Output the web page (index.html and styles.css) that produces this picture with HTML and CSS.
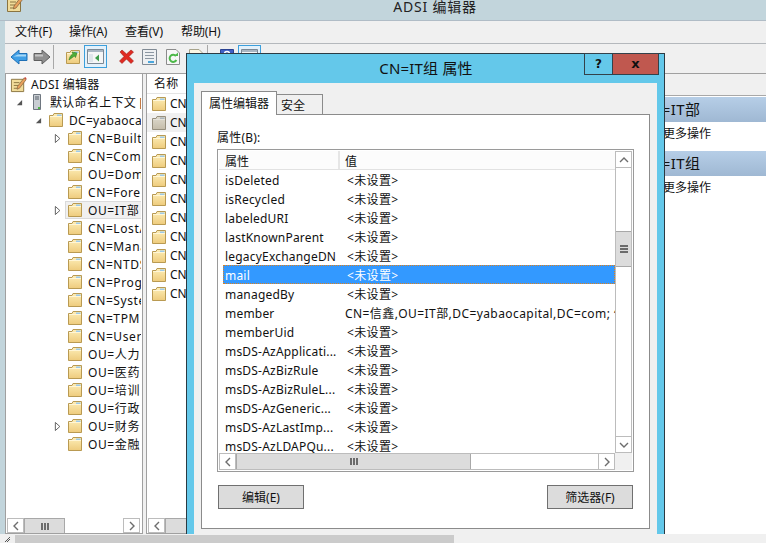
FILE: index.html
```html
<!DOCTYPE html>
<html lang="zh-CN">
<head>
    <meta charset="UTF-8">
    <title>ADSI 编辑器</title>
    <link rel="stylesheet" href="styles.css">
</head>
<body>
    <svg class="defs" width="0" height="0">
        <defs>
            <linearGradient id="folderFill" x1="0" y1="0" x2="0" y2="1">
                <stop offset="0" stop-color="#fdeeb8"/>
                <stop offset="1" stop-color="#eecb7c"/>
            </linearGradient>
            <symbol id="folder" viewBox="0 0 16 16">
                <path d="M1.5 3.5 H5 L6 1.5 H14.5 V14.5 H1.5 Z" fill="url(#folderFill)" stroke="#b99a52"/>
                <path d="M9 2.5 H13.5 V4.5 H9 Z" fill="#9cc9e8"/>
                <path d="M2 4.5 H14" stroke="#fff6d6"/>
            </symbol>
            <symbol id="twistOpen" viewBox="0 0 8 8" preserveAspectRatio="xMinYMid">
                <path d="M7 1 V7 H1 Z" fill="#555"/>
            </symbol>
            <symbol id="twistClosed" viewBox="0 0 8 10" preserveAspectRatio="xMinYMid">
                <path d="M1.5 0.5 L6.5 5 L1.5 9.5 Z" fill="#fff" stroke="#555"/>
            </symbol>
            <symbol id="chevLeft" viewBox="0 0 10 10">
                <path d="M7 1 L3 5 L7 9" fill="none" stroke="#6d6d6d" stroke-width="1.4"/>
            </symbol>
            <symbol id="chevRight" viewBox="0 0 10 10">
                <path d="M3 1 L7 5 L3 9" fill="none" stroke="#6d6d6d" stroke-width="1.4"/>
            </symbol>
            <symbol id="chevUp" viewBox="0 0 10 10">
                <path d="M1 7 L5 3 L9 7" fill="none" stroke="#6d6d6d" stroke-width="1.4"/>
            </symbol>
            <symbol id="chevDown" viewBox="0 0 10 10">
                <path d="M1 3 L5 7 L9 3" fill="none" stroke="#6d6d6d" stroke-width="1.4"/>
            </symbol>
            <symbol id="appIcon" viewBox="0 0 18 18">
                <path d="M1.5 3.5 H14.5 V16.5 H1.5 Z" fill="#f1dc9a" stroke="#8a7440"/>
                <path d="M4 7 H10 M4 10 H9 M4 13 H8" stroke="#8a7440"/>
                <path d="M8 11 L15 2 L17 4 L10 13 L7.5 14 Z" fill="#e8a15c" stroke="#7c5a38" stroke-width=".7"/>
                <path d="M15 2 L17 4 L17.5 2.5 L16 1 Z" fill="#c8433a"/>
            </symbol>
        </defs>
    </svg>

    <div class="app">
        <header class="titlebar">
            <svg class="app-icon"><use href="#appIcon"/></svg>
            <span class="title-text">ADSI 编辑器</span>
        </header>

        <nav class="menubar">
            <span class="menu-item">文件(F)</span>
            <span class="menu-item">操作(A)</span>
            <span class="menu-item">查看(V)</span>
            <span class="menu-item">帮助(H)</span>
        </nav>

        <div class="toolbar">
            <span class="tool">
                <svg width="18" height="16" viewBox="0 0 18 16"><path d="M1 8 L9 1 V4.5 H17 V11.5 H9 V15 Z" fill="#3f9fe6" stroke="#1f6fb5"/><path d="M8 5.5 H16 V7.5 H3.5 Z" fill="#a6d8f7"/></svg>
            </span>
            <span class="tool">
                <svg width="18" height="16" viewBox="0 0 18 16"><path d="M17 8 L9 1 V4.5 H1 V11.5 H9 V15 Z" fill="#8f8f8f" stroke="#5e5e5e"/><path d="M2 5.5 H10 V7.5 H2 Z" fill="#c4c4c4"/></svg>
            </span>
            <span class="tool-sep"></span>
            <span class="tool">
                <svg width="16" height="16" viewBox="0 0 16 16"><use href="#folder"/><path d="M4 11 C5 7 6 6 8 5 L7 3 L12 4 L10.5 8.5 L9.5 7 C8 8 6.5 9 4 11 Z" fill="#4fae3a" stroke="#2d7d21" stroke-width=".6"/></svg>
            </span>
            <span class="tool tool-on">
                <svg width="17" height="15" viewBox="0 0 17 15"><path d="M.5 .5 H16.5 V14.5 H.5 Z" fill="#f6f6f6" stroke="#7c8894"/><path d="M1 1 H16 V3 H1 Z" fill="#a9b6c2"/><path d="M2 5 H6 V13 H2 Z" fill="#dfe5ea"/><path d="M8 9 L12 5.5 V12.5 Z" fill="#3d9c4a"/></svg>
            </span>
            <span class="tool tool-group">
                <svg width="17" height="17" viewBox="0 0 17 17"><path d="M2 4 L4 2 L8.5 6 L13 2 L15.5 4 L11 8.5 L15.5 13 L13 15.5 L8.5 11 L4 15.5 L1.5 13 L6 8.5 Z" fill="#e02a22" stroke="#9c1f1a" stroke-width=".6"/></svg>
            </span>
            <span class="tool">
                <svg width="15" height="16" viewBox="0 0 15 16"><path d="M.5 .5 H14.5 V15.5 H.5 Z" fill="#eef0f2" stroke="#808a94"/><path d="M3 3.5 H12 M3 6.5 H12 M3 9.5 H12" stroke="#8c97a2"/><path d="M6 12 H12 V14 H6 Z" fill="#4aa6dc"/></svg>
            </span>
            <span class="tool">
                <svg width="14" height="16" viewBox="0 0 14 16"><path d="M.5 .5 H10 L13.5 4 V15.5 H.5 Z" fill="#f7f7f7" stroke="#8c8c8c"/><path d="M10 7 A3.6 3.6 0 1 0 10.4 11" fill="none" stroke="#4cb848" stroke-width="2"/><path d="M8 7 H12 V3.5 Z" fill="#4cb848"/></svg>
            </span>
            <span class="tool">
                <svg width="14" height="16" viewBox="0 0 14 16"><path d="M.5 .5 H10 L13.5 4 V15.5 H.5 Z" fill="#fbf7e4" stroke="#a8a48c"/></svg>
            </span>
            <span class="tool-sep"></span>
            <span class="tool">
                <svg width="14" height="16" viewBox="0 0 14 16"><path d="M.5 .5 H13.5 V15.5 H.5 Z" fill="#3f5fc4" stroke="#2a4292"/><circle cx="7" cy="5" r="2.5" fill="none" stroke="#fff" stroke-width="1.4"/></svg>
            </span>
            <span class="tool tool-on">
                <svg width="17" height="15" viewBox="0 0 17 15"><path d="M.5 .5 H16.5 V14.5 H.5 Z" fill="#f6f6f6" stroke="#7c8894"/><path d="M1 1 H16 V3 H1 Z" fill="#a9b6c2"/></svg>
            </span>
        </div>

        <div class="workspace">
            <aside class="pane tree-pane">
                <div class="tree">
                    <div class="tree-row depth-0"><svg class="app-small"><use href="#appIcon"/></svg><span>ADSI 编辑器</span></div>
                    <div class="tree-row depth-1">
                        <svg class="twist"><use href="#twistOpen"/></svg>
                        <svg class="row-icon" viewBox="0 0 16 16"><path d="M4.5 .5 H11.5 V15.5 H4.5 Z" fill="#c9ced3" stroke="#6f7780"/><path d="M6 3 H10 M6 5 H10" stroke="#59616a"/><path d="M9 13 H11 V15 H9 Z" fill="#4fb548"/></svg>
                        <span>默认命名上下文 [</span>
                    </div>
                    <div class="tree-row depth-2"><svg class="twist"><use href="#twistOpen"/></svg><svg class="row-icon"><use href="#folder"/></svg><span>DC=yabaocapital,DC=com</span></div>
                    <div class="tree-row depth-3"><svg class="twist closed"><use href="#twistClosed"/></svg><svg class="row-icon"><use href="#folder"/></svg><span>CN=Builtin</span></div>
                    <div class="tree-row depth-3"><i class="twist"></i><svg class="row-icon"><use href="#folder"/></svg><span>CN=Computers</span></div>
                    <div class="tree-row depth-3"><i class="twist"></i><svg class="row-icon"><use href="#folder"/></svg><span>OU=Domain Controllers</span></div>
                    <div class="tree-row depth-3"><i class="twist"></i><svg class="row-icon"><use href="#folder"/></svg><span>CN=ForeignSecurityPrincipals</span></div>
                    <div class="tree-row depth-3 tree-row-on"><svg class="twist closed"><use href="#twistClosed"/></svg><svg class="row-icon"><use href="#folder"/></svg><span>OU=IT部</span></div>
                    <div class="tree-row depth-3"><i class="twist"></i><svg class="row-icon"><use href="#folder"/></svg><span>CN=LostAndFound</span></div>
                    <div class="tree-row depth-3"><i class="twist"></i><svg class="row-icon"><use href="#folder"/></svg><span>CN=Managed Service</span></div>
                    <div class="tree-row depth-3"><i class="twist"></i><svg class="row-icon"><use href="#folder"/></svg><span>CN=NTDS Quotas</span></div>
                    <div class="tree-row depth-3"><i class="twist"></i><svg class="row-icon"><use href="#folder"/></svg><span>CN=Program Data</span></div>
                    <div class="tree-row depth-3"><i class="twist"></i><svg class="row-icon"><use href="#folder"/></svg><span>CN=System</span></div>
                    <div class="tree-row depth-3"><i class="twist"></i><svg class="row-icon"><use href="#folder"/></svg><span>CN=TPM Devices</span></div>
                    <div class="tree-row depth-3"><i class="twist"></i><svg class="row-icon"><use href="#folder"/></svg><span>CN=Users</span></div>
                    <div class="tree-row depth-3"><i class="twist"></i><svg class="row-icon"><use href="#folder"/></svg><span>OU=人力</span></div>
                    <div class="tree-row depth-3"><i class="twist"></i><svg class="row-icon"><use href="#folder"/></svg><span>OU=医药</span></div>
                    <div class="tree-row depth-3"><i class="twist"></i><svg class="row-icon"><use href="#folder"/></svg><span>OU=培训</span></div>
                    <div class="tree-row depth-3"><i class="twist"></i><svg class="row-icon"><use href="#folder"/></svg><span>OU=行政</span></div>
                    <div class="tree-row depth-3"><svg class="twist closed"><use href="#twistClosed"/></svg><svg class="row-icon"><use href="#folder"/></svg><span>OU=财务</span></div>
                    <div class="tree-row depth-3"><i class="twist"></i><svg class="row-icon"><use href="#folder"/></svg><span>OU=金融</span></div>
                </div>
                <div class="hscroll tree-scroll">
                    <span class="sb-btn"><svg><use href="#chevLeft"/></svg></span>
                    <span class="sb-thumb tree-thumb"><i class="grip"></i></span>
                    <span class="sb-track"></span>
                    <span class="sb-btn"><svg><use href="#chevRight"/></svg></span>
                </div>
            </aside>

            <section class="pane list-pane">
                <div class="list-head">名称</div>
                <div class="list-rows">
                    <div class="list-row"><svg class="row-icon"><use href="#folder"/></svg><span>CN</span></div>
                    <div class="list-row list-row-on"><svg class="row-icon dim"><use href="#folder"/></svg><span>CN</span></div>
                    <div class="list-row"><svg class="row-icon"><use href="#folder"/></svg><span>CN</span></div>
                    <div class="list-row"><svg class="row-icon"><use href="#folder"/></svg><span>CN</span></div>
                    <div class="list-row"><svg class="row-icon"><use href="#folder"/></svg><span>CN</span></div>
                    <div class="list-row"><svg class="row-icon"><use href="#folder"/></svg><span>CN</span></div>
                    <div class="list-row"><svg class="row-icon"><use href="#folder"/></svg><span>CN</span></div>
                    <div class="list-row"><svg class="row-icon"><use href="#folder"/></svg><span>CN</span></div>
                    <div class="list-row"><svg class="row-icon"><use href="#folder"/></svg><span>CN</span></div>
                    <div class="list-row"><svg class="row-icon"><use href="#folder"/></svg><span>CN</span></div>
                    <div class="list-row"><svg class="row-icon"><use href="#folder"/></svg><span>CN</span></div>
                </div>
                <div class="hscroll list-scroll">
                    <span class="sb-btn"><svg><use href="#chevLeft"/></svg></span>
                    <span class="sb-thumb list-thumb"></span>
                </div>
            </section>

            <aside class="actions">
                <div class="actions-top"></div>
                <div class="action-head">CN=IT部</div>
                <div class="action-link">更多操作</div>
                <div class="action-head action-head-next">CN=IT组</div>
                <div class="action-link">更多操作</div>
            </aside>
        </div>

        <footer class="statusbar">
            <span class="status-corner"><svg width="8" height="8" viewBox="0 0 8 8"><path d="M1 7 L6 2 M3 7 L6 4" stroke="#555"/></svg></span>
            <span class="status-thumb"></span>
        </footer>
    </div>

    <div class="dialog">
        <div class="dialog-title">
            <span class="dialog-name">CN=IT组 属性</span>
            <span class="cap-btn cap-help">?</span>
            <span class="cap-btn cap-close">x</span>
        </div>
        <div class="dialog-client">
            <div class="tabs">
                <span class="tab tab-on">属性编辑器</span>
                <span class="tab">安全</span>
            </div>
            <div class="tab-page">
                <label class="attr-label">属性(B):</label>
                <div class="attr-box">
                    <div class="attr-main">
                        <div class="attr-view">
                            <div class="attr-head"><span class="col-name">属性</span><span class="col-value">值</span></div>
                            <div class="attr-row"><span class="col-name">isDeleted</span><span class="col-value">&lt;未设置&gt;</span></div>
                            <div class="attr-row"><span class="col-name">isRecycled</span><span class="col-value">&lt;未设置&gt;</span></div>
                            <div class="attr-row"><span class="col-name">labeledURI</span><span class="col-value">&lt;未设置&gt;</span></div>
                            <div class="attr-row"><span class="col-name">lastKnownParent</span><span class="col-value">&lt;未设置&gt;</span></div>
                            <div class="attr-row"><span class="col-name">legacyExchangeDN</span><span class="col-value">&lt;未设置&gt;</span></div>
                            <div class="attr-row attr-row-on"><span class="col-name">mail</span><span class="col-value">&lt;未设置&gt;</span></div>
                            <div class="attr-row"><span class="col-name">managedBy</span><span class="col-value">&lt;未设置&gt;</span></div>
                            <div class="attr-row"><span class="col-name">member</span><span class="col-value col-long">CN=信鑫,OU=IT部,DC=yabaocapital,DC=com; 信</span></div>
                            <div class="attr-row"><span class="col-name">memberUid</span><span class="col-value">&lt;未设置&gt;</span></div>
                            <div class="attr-row"><span class="col-name">msDS-AzApplicati...</span><span class="col-value">&lt;未设置&gt;</span></div>
                            <div class="attr-row"><span class="col-name">msDS-AzBizRule</span><span class="col-value">&lt;未设置&gt;</span></div>
                            <div class="attr-row"><span class="col-name">msDS-AzBizRuleL...</span><span class="col-value">&lt;未设置&gt;</span></div>
                            <div class="attr-row"><span class="col-name">msDS-AzGeneric...</span><span class="col-value">&lt;未设置&gt;</span></div>
                            <div class="attr-row"><span class="col-name">msDS-AzLastImp...</span><span class="col-value">&lt;未设置&gt;</span></div>
                            <div class="attr-row"><span class="col-name">msDS-AzLDAPQu...</span><span class="col-value">&lt;未设置&gt;</span></div>
                        </div>
                        <div class="vscroll">
                            <span class="sb-btn"><svg><use href="#chevUp"/></svg></span>
                            <span class="v-gap-top"></span>
                            <span class="v-thumb"><i class="grip-h"></i></span>
                            <span class="sb-track"></span>
                            <span class="sb-btn"><svg><use href="#chevDown"/></svg></span>
                        </div>
                    </div>
                    <div class="attr-foot">
                        <div class="hscroll attr-scroll">
                            <span class="sb-btn"><svg><use href="#chevLeft"/></svg></span>
                            <span class="sb-thumb attr-thumb"><i class="grip"></i></span>
                            <span class="sb-track"></span>
                            <span class="sb-btn"><svg><use href="#chevRight"/></svg></span>
                        </div>
                        <span class="attr-corner"></span>
                    </div>
                </div>
                <div class="dialog-buttons">
                    <button class="btn">编辑(E)</button>
                    <button class="btn">筛选器(F)</button>
                </div>
            </div>
        </div>
    </div>
</body>
</html>
```

FILE: styles.css
```css
* {
    margin: 0;
    padding: 0;
    box-sizing: border-box;
}
html, body {
    width: 766px;
    height: 543px;
    overflow: hidden;
}
body {
    position: relative;
    font-family: "Noto Sans", "Noto Sans CJK SC", sans-serif;
    font-size: 12px;
    color: #111;
    background: #c2d5dc;
}
.defs {
    position: absolute;
}
.app {
    display: flex;
    flex-direction: column;
    height: 543px;
}

/* window frame */
.titlebar {
    height: 21px;
    flex: none;
    position: relative;
    display: flex;
    justify-content: center;
    border-bottom: 1px solid #b0bcc6;
    background: #c2d5dc;
    overflow: hidden;
}
.app-icon {
    position: absolute;
    left: 6px;
    top: -5px;
    width: 18px;
    height: 18px;
}
.title-text {
    margin-left: 104px;
    margin-top: -3px;
    font-size: 14px;
    line-height: 19px;
    letter-spacing: .8px;
    color: #222;
}
.menubar {
    height: 23px;
    flex: none;
    display: flex;
    align-items: center;
    background: #f0f0f0;
    border-bottom: 1px solid #b4b8bc;
    margin-left: 5px;
    padding-left: 10px;
}
.menu-item {
    width: 56px;
    line-height: 20px;
    letter-spacing: -.1px;
}
.menu-item:first-child {
    width: 54px;
}
.toolbar {
    height: 29px;
    flex: none;
    display: flex;
    align-items: flex-start;
    padding: 1px 0 0 2px;
    margin-left: 5px;
    background: #f0f0f0;
}
.tool {
    width: 23px;
    height: 23px;
    flex: none;
    display: flex;
    align-items: center;
    justify-content: center;
}
.tool-on {
    background: #e3f1fb;
    border: 1px solid #3c9fdc;
}
.tool-group {
    margin-left: 8px;
}
.tool-sep {
    width: 1px;
    height: 24px;
    flex: none;
    margin-right: 7px;
    background: #a8a8a8;
}

.workspace {
    flex: 1;
    min-height: 0;
    display: flex;
    margin-left: 5px;
    background: #f0f0f0;
    border-top: 1px solid #a0a0a0;
}
.pane {
    display: flex;
    flex-direction: column;
    background: #fff;
    border: 1px solid #a0a0a0;
    border-top: none;
    overflow: hidden;
}
.tree-pane {
    width: 138px;
    flex: none;
    padding-right: 1px;
}
.tree {
    flex: 1;
    padding-top: 1px;
    overflow: hidden;
}
.tree-row {
    height: 18px;
    display: flex;
    align-items: center;
    white-space: nowrap;
    position: relative;
    letter-spacing: .3px;
}
.tree-row span {
    flex: none;
}
.depth-0 {
    padding-left: 4px;
}
.depth-1 {
    padding-left: 8px;
}
.depth-2 {
    padding-left: 27px;
}
.depth-3 {
    padding-left: 46px;
    letter-spacing: .6px;
}
.app-small {
    width: 17px;
    height: 17px;
    margin-right: 4px;
    flex: none;
}
.twist {
    width: 15px;
    height: 7px;
    padding-left: 2px;
    flex: none;
}
.twist.closed {
    height: 9px;
}
.row-icon {
    width: 16px;
    height: 16px;
    flex: none;
    margin-right: 5px;
}
.row-icon.dim {
    filter: saturate(.25) brightness(.92);
}
.tree-row-on::before {
    content: "";
    position: absolute;
    left: 59px;
    right: -4px;
    top: 0;
    bottom: 0;
    background: #f0f0f0;
    border: 1px solid #dadada;
}
.tree-row-on > * {
    position: relative;
}

/* scrollbars */
.hscroll {
    height: 15px;
    flex: none;
    display: flex;
    padding: 0 1px;
    background: #fff;
}
.sb-btn {
    flex: none;
    display: flex;
    align-items: center;
    justify-content: center;
    width: 17px;
    height: 15px;
    border: 1px solid #bcbcbc;
    background: #fff;
}
.sb-btn svg {
    width: 10px;
    height: 10px;
}
.sb-thumb {
    flex: none;
    display: flex;
    align-items: center;
    justify-content: center;
    background: #dcdcdc;
    border: 1px solid #a8a8a8;
    border-bottom: none;
}
.sb-track {
    flex: 1;
}
.grip {
    width: 8px;
    height: 7px;
    background: repeating-linear-gradient(90deg, #6b6b6b 0 2px, transparent 2px 3px);
}
.grip-h {
    width: 8px;
    height: 8px;
    background: repeating-linear-gradient(0deg, #6b6b6b 0 2px, transparent 2px 3px);
}
.tree-thumb {
    width: 41px;
}

/* list */
.list-pane {
    flex: 1;
    margin-left: 3px;
    min-width: 0;
}
.list-head {
    height: 19px;
    flex: none;
    margin-top: 1px;
    padding-left: 7px;
    line-height: 18px;
    border-bottom: 1px solid #e4e4e4;
    letter-spacing: .3px;
}
.list-rows {
    flex: 1;
    overflow: hidden;
}
.list-row {
    height: 19px;
    display: flex;
    align-items: center;
    padding-left: 4px;
    white-space: nowrap;
}
.list-row .row-icon {
    margin-right: 3px;
}
.list-row-on {
    background: #f0f0f0;
}
.list-thumb {
    width: 22px;
}

/* actions */
.actions {
    width: 132px;
    flex: none;
    background: #fff;
}
.actions-top {
    height: 22px;
    margin-bottom: 1px;
    background: #f0f0f0;
    border-bottom: 1px solid #a8a8a8;
}
.action-head {
    height: 25px;
    padding-left: 6px;
    font-size: 15px;
    letter-spacing: .4px;
    line-height: 24px;
    background: linear-gradient(#b6cee7, #9fb8d3);
}
.action-head-next {
    margin-top: 1px;
}
.action-link {
    height: 28px;
    padding-left: 29px;
    line-height: 24px;
}

.statusbar {
    height: 9px;
    flex: none;
    display: flex;
    background: #f0f0f0;
    border-top: 1px solid #f0f0f0;
}
.status-corner {
    width: 15px;
    flex: none;
    display: flex;
    align-items: center;
    justify-content: center;
}
.status-thumb {
    width: 439px;
    background: #cbcbcb;
}

/* dialog */
.dialog {
    position: absolute;
    left: 186px;
    top: 53px;
    width: 479px;
    height: 481px;
    display: flex;
    flex-direction: column;
    background: #64c8ea;
    border: 1px solid #2b3a42;
    border-bottom: none;
    padding: 0 7px;
}
.dialog-title {
    height: 29px;
    flex: none;
    position: relative;
    text-align: center;
    margin-right: -1px;
}
.dialog-name {
    display: block;
    font-size: 15px;
    line-height: 27px;
    padding-top: 1px;
    letter-spacing: .2px;
    color: #111;
}
.cap-btn {
    position: absolute;
    top: -1px;
    height: 22px;
    border: 1px solid #33414a;
    text-align: center;
    font-family: "DejaVu Sans", sans-serif;
    font-weight: bold;
    font-size: 12px;
    line-height: 20px;
    color: #111;
}
.cap-help {
    left: 390px;
    width: 29px;
    background: #64c8ea;
}
.cap-close {
    left: 418px;
    width: 47px;
    background: #c0584f;
    font-size: 13px;
}
.dialog-client {
    flex: 1;
    min-height: 0;
    display: flex;
    flex-direction: column;
    background: #f0f0f0;
    padding: 9px 7px 5px;
}
.tabs {
    height: 23px;
    flex: none;
    display: flex;
    align-items: flex-end;
    position: relative;
    z-index: 1;
    margin-bottom: -1px;
}
.tab {
    width: 46px;
    height: 21px;
    padding-left: 4px;
    line-height: 22px;
    background: #f0f0f0;
    border: 1px solid #8b8b8b;
    border-left: none;
}
.tab-on {
    width: 76px;
    height: 24px;
    padding-left: 7px;
    line-height: 24px;
    background: #fff;
    border-left: 1px solid #8b8b8b;
    border-bottom: none;
}
.tab-page {
    flex: 1;
    min-height: 0;
    width: 449px;
    padding: 14px 15px 0;
    background: #fff;
    border: 1px solid #8b8b8b;
}
.attr-label {
    display: block;
    height: 20px;
    line-height: 17px;
    letter-spacing: .2px;
}
.attr-box {
    width: 417px;
    height: 323px;
    display: flex;
    flex-direction: column;
    padding: 1px;
    border: 1px solid #9a9a9a;
}
.attr-main {
    flex: 1;
    min-height: 0;
    display: flex;
}
.attr-view {
    width: 396px;
    flex: none;
    overflow: hidden;
}
.attr-head {
    height: 19px;
    display: flex;
    background: #fcfcfc;
    border-bottom: 1px solid #e2e2e2;
    line-height: 21px;
}
.attr-head .col-name {
    width: 121px;
    border-right: 2px solid #e6e6e6;
}
.attr-head .col-value {
    padding-left: 5px;
}
.attr-row {
    height: 19px;
    display: flex;
    padding-top: 2px;
    line-height: 18px;
    white-space: nowrap;
    letter-spacing: .2px;
}
.col-name {
    width: 120px;
    flex: none;
    padding-left: 6px;
    overflow: hidden;
}
.col-value {
    padding-left: 8px;
    letter-spacing: .35px;
}
.col-long {
    padding-left: 6px;
    letter-spacing: .42px;
}
.attr-row-on {
    color: #fff;
    margin-left: 4px;
    background: #3399ff;
    outline: 1px dotted #e0801a;
    outline-offset: -1px;
}
.attr-row-on .col-name {
    width: 116px;
    padding-left: 2px;
}
.vscroll {
    width: 17px;
    flex: none;
    display: flex;
    flex-direction: column;
    border-left: 1px solid #bcbcbc;
    border-right: 1px solid #bcbcbc;
}
.vscroll .sb-btn {
    width: 100%;
    height: 17px;
    border-width: 1px 0;
}
.v-gap-top {
    height: 63px;
    flex: none;
}
.v-thumb {
    height: 36px;
    flex: none;
    display: flex;
    align-items: center;
    justify-content: center;
    background: #dcdcdc;
    border: solid #a8a8a8;
    border-width: 1px 0;
}
.attr-foot {
    height: 17px;
    flex: none;
    display: flex;
}
.attr-scroll {
    width: 396px;
    height: 17px;
    flex: none;
    padding: 0;
    border: 1px solid #bcbcbc;
}
.attr-scroll .sb-btn {
    height: 15px;
    width: 16px;
    border-width: 0 1px 0 0;
}
.attr-scroll .sb-btn:last-child {
    border-width: 0 0 0 1px;
}
.attr-thumb {
    width: 235px;
    border-width: 0 1px;
}
.attr-corner {
    flex: 1;
    background: #f0f0f0;
}
.dialog-buttons {
    display: flex;
    justify-content: space-between;
    width: 415px;
    margin: 13px 0 0 1px;
}
.btn {
    width: 86px;
    height: 24px;
    font: inherit;
    color: #111;
    background: #dcdcdc;
    border: 1px solid #707070;
}
```
